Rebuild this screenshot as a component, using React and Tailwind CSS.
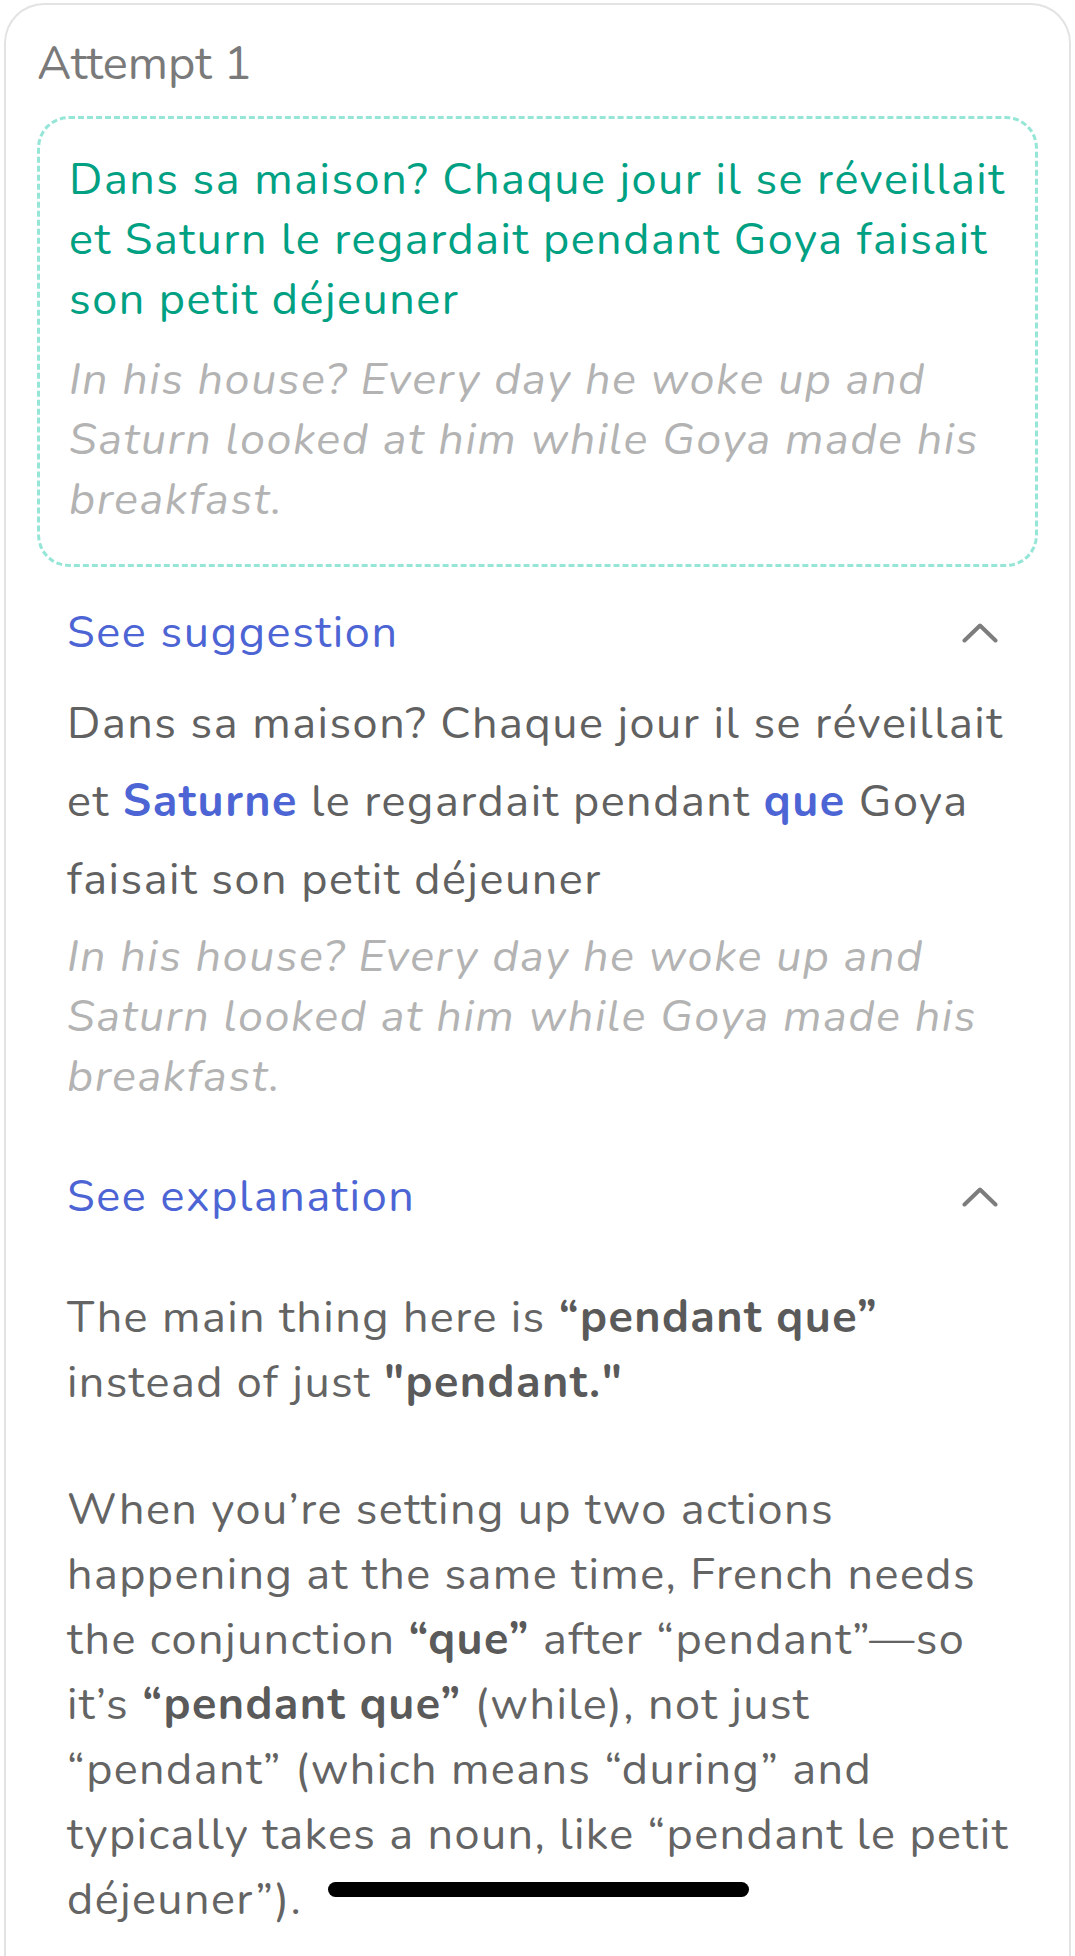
import React from 'react';

const font = { fontFamily: 'Nunito, Lato, "Noto Sans", sans-serif' };

function Chevron() {
    return (
        <svg width="36" height="20" viewBox="0 0 36 20" fill="none" className="shrink-0">
            <path d="M2.5 17.5 L18 2.5 L33.5 17.5" stroke="#7d7d7d" strokeWidth="4" strokeLinecap="round" strokeLinejoin="round" />
        </svg>
    );
}

function SectionHeader({ title }) {
    return (
        <div className="flex items-center justify-between pr-[40px]">
            <span className="text-[45px] leading-[60px] tracking-[1.6px] text-[#4d65d4]">{title}</span>
            <Chevron />
        </div>
    );
}

export default function App() {
    return (
        <div className="relative min-h-[1956px] bg-white overflow-hidden" style={font}>
            {/* Attempt card */}
            <div className="mx-[4px] mt-[3px] min-h-[1960px] rounded-t-[40px] border-2 border-b-0 border-[#e3e3e3] px-[31px] pt-[28px]">
                <h2 className="text-[47px] leading-[62px] text-[#7a7a7a]">Attempt 1</h2>

                {/* Submitted answer */}
                <div className="mt-[21px] rounded-[32px] border-[3px] border-dashed border-[#95e6d7] pl-[29px] pr-[20px] pt-[31px] pb-[34px]">
                    <p className="text-[45px] leading-[60px] tracking-[1.5px] text-[#00a083] whitespace-nowrap">
                        Dans sa maison? Chaque jour il se réveillait<br />
                        et Saturn le regardait pendant Goya faisait<br />
                        son petit déjeuner
                    </p>
                    <p className="mt-[20px] text-[45px] leading-[60px] tracking-[1.5px] italic text-[#b3b3b3] whitespace-nowrap">
                        In his house? Every day he woke up and<br />
                        Saturn looked at him while Goya made his<br />
                        breakfast.
                    </p>
                </div>

                {/* Suggestion */}
                <div className="mt-[36px] pl-[30px]">
                    <SectionHeader title="See suggestion" />
                    <p className="mt-[22px] text-[45px] leading-[78px] tracking-[1.5px] text-[#616161] whitespace-nowrap">
                        Dans sa maison? Chaque jour il se réveillait<br />
                        et <span className="font-bold text-[#4d65d4]">Saturne</span> le regardait pendant <span className="font-bold text-[#4d65d4]">que</span> Goya<br />
                        faisait son petit déjeuner
                    </p>
                    <p className="mt-[8px] text-[45px] leading-[60px] tracking-[1.5px] italic text-[#b3b3b3] whitespace-nowrap">
                        In his house? Every day he woke up and<br />
                        Saturn looked at him while Goya made his<br />
                        breakfast.
                    </p>
                </div>

                {/* Explanation */}
                <div className="mt-[60px] pl-[30px]">
                    <SectionHeader title="See explanation" />
                    <div className="mt-[58px] text-[45px] leading-[65px] tracking-[1.4px] text-[#646464] whitespace-nowrap">
                        <p>
                            The main thing here is <b className="text-[#5a5a5a]">“pendant que”</b><br />
                            instead of just <b className="text-[#5a5a5a]">"pendant."</b>
                        </p>
                        <p className="mt-[62px]">
                            When you’re setting up two actions<br />
                            happening at the same time, French needs<br />
                            the conjunction <b className="text-[#5a5a5a]">“que”</b> after “pendant”—so<br />
                            it’s <b className="text-[#5a5a5a]">“pendant que”</b> (while), not just<br />
                            “pendant” (which means “during” and<br />
                            typically takes a noun, like “pendant le petit<br />
                            déjeuner”).
                        </p>
                    </div>
                </div>
            </div>

            {/* Home indicator */}
            <div className="absolute left-[328px] top-[1882px] h-[15px] w-[421px] rounded-full bg-black" />
        </div>
    );
}
